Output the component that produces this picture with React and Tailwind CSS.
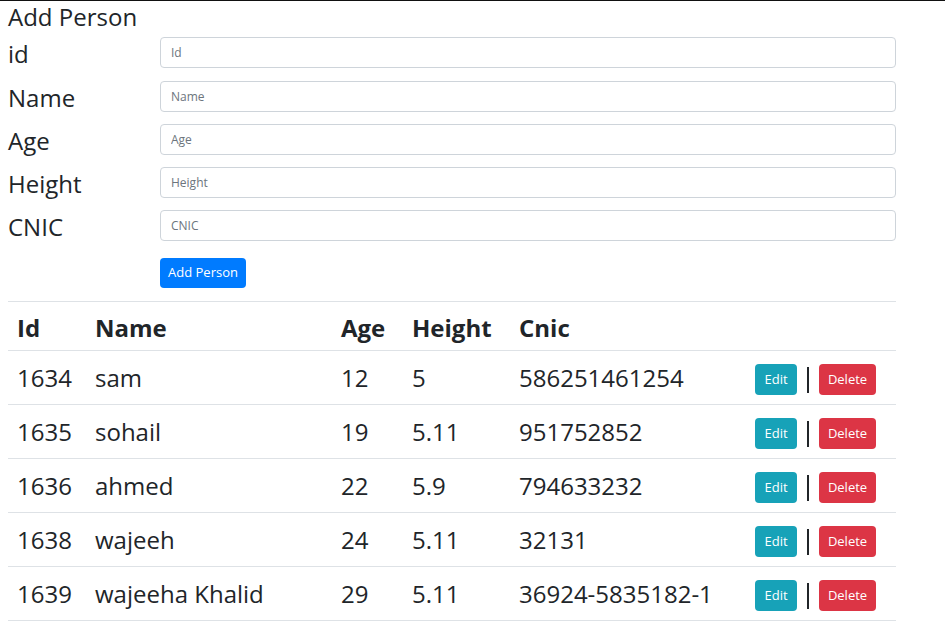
import React from "react";

const rows = [
  ["1634", "sam", "12", "5", "586251461254"],
  ["1635", "sohail", "19", "5.11", "951752852"],
  ["1636", "ahmed", "22", "5.9", "794633232"],
  ["1638", "wajeeh", "24", "5.11", "32131"],
  ["1639", "wajeeha Khalid", "29", "5.11", "36924-5835182-1"],
];

const fields = [
  ["id", "Id"],
  ["Name", "Name"],
  ["Age", "Age"],
  ["Height", "Height"],
  ["CNIC", "CNIC"],
];

const grid = "grid grid-cols-[78px_246px_71px_107px_236px_150px]";

export default function App() {
  return (
    <div
      className="min-h-[623px] w-[945px] border-t border-[#111] bg-white text-[#212529]"
      style={{ fontFamily: '"Open Sans", "Noto Sans", sans-serif' }}
    >
      <div className="w-[888px] ml-2">
        <div className="h-[30px] text-[24px] leading-[32px]">Add Person</div>
        <div className="flex flex-col">
          {fields.map(([label, ph], i) => (
            <div
              key={label}
              className={`flex items-start pt-[6px] ${i === 0 ? "h-[44px]" : "h-[43px]"}`}
            >
              <div className="flex h-[31px] w-[152px] items-center pt-[2px] text-[24px] leading-none">
                {label}
              </div>
              <input
                placeholder={ph}
                className="h-[31px] flex-1 rounded-[4px] border border-[#ced4da] px-[10px] text-[12px] outline-none placeholder:text-[#6c757d]"
              />
            </div>
          ))}
        </div>
        <div className="mt-[11px] pl-[152px]">
          <button className="h-[30px] w-[86px] rounded-[4px] bg-[#007bff] text-[13px] text-white">
            Add Person
          </button>
        </div>
        <div className="mt-[13px] border-t border-[#dee2e6]">
          <div className={`${grid} h-[49px] items-center border-b border-[#dee2e6] pt-[3px] text-[24px] font-bold`}>
            <div className="pl-[9px]">Id</div>
            <div className="pl-[9px]">Name</div>
            <div className="pl-[9px]">Age</div>
            <div className="pl-[9px]">Height</div>
            <div className="pl-[9px]">Cnic</div>
            <div />
          </div>
          {rows.map((r) => (
            <div
              key={r[0]}
              className={`${grid} h-[54px] items-center border-b border-[#dee2e6] text-[24px]`}
            >
              {r.map((c, i) => (
                <div key={i} className="pl-[9px] whitespace-nowrap">
                  {c}
                </div>
              ))}
              <div className="flex items-center pl-[9px] pt-[4px]">
                <button className="h-[31px] w-[42px] rounded-[4px] bg-[#17a2b8] text-[13px] text-white">
                  Edit
                </button>
                <span className="mx-[10px] h-[26px] w-[2px] bg-[#212529]" />
                <button className="h-[31px] w-[57px] rounded-[4px] bg-[#dc3545] text-[13px] text-white">
                  Delete
                </button>
              </div>
            </div>
          ))}
        </div>
      </div>
    </div>
  );
}
